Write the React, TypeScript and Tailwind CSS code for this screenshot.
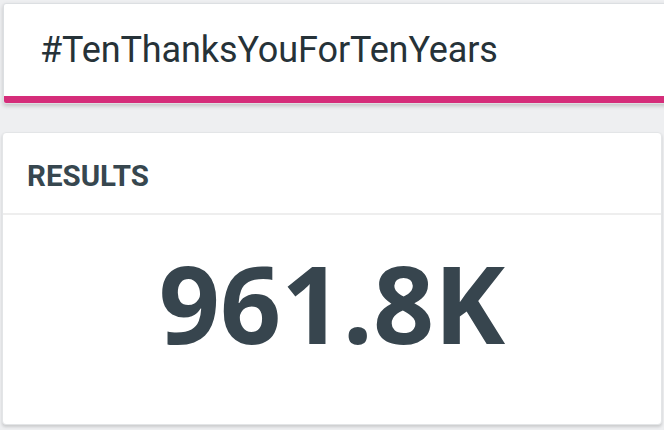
export default function App() {
  return (
    <div className="w-[664px] h-[430px] overflow-hidden bg-[#eeeff1] font-['Roboto',sans-serif]">
      {/* Search term card */}
      <div className="ml-[3px] mt-[3px] -mr-[6px] h-[101px] bg-white border border-[#dcdfe2] rounded-[3px] shadow-[0_2px_4px_rgba(0,0,0,0.18)] flex flex-col overflow-hidden">
        <div className="flex-1 flex items-center pl-[36px] pt-[1px] pb-[2px]">
          <span className="text-[36px] leading-none text-[#263238] tracking-[-0.1px]">#TenThanksYouForTenYears</span>
        </div>
        <div className="h-[7px] bg-[#d52d7a]" />
      </div>

      {/* Results card */}
      <div className="mx-[2px] mt-[28px] h-[293px] bg-white rounded-[4px] border border-[#e3e5e7] shadow-[0_2px_3px_rgba(0,0,0,0.15)] flex flex-col">
        <div className="h-[82px] flex items-center pl-[24px] pt-[8px] border-b-2 border-[#eeeeee]">
          <span className="text-[29.5px] leading-none font-bold text-[#37474f]">RESULTS</span>
        </div>
        <div className="flex-1 flex justify-center pt-[34px]">
          <span className="font-['Open_Sans',sans-serif] font-bold text-[107px] leading-none text-[#37454e]">961.8K</span>
        </div>
      </div>
    </div>
  );
}
